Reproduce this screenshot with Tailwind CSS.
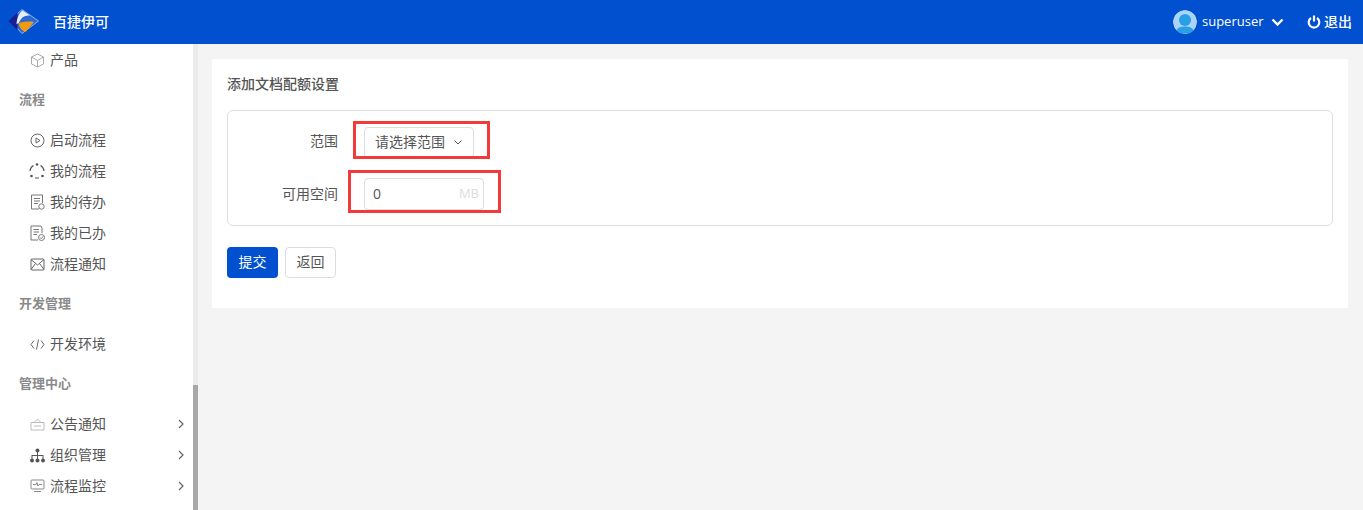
<!DOCTYPE html>
<html class="h-full w-full" lang="zh">
<head>
<meta charset="UTF-8" />
<script src="https://cdn.jsdelivr.net/npm/@tailwindcss/browser@4"></script>
</head>
<body class="h-[510px] w-[1363px] overflow-hidden flex flex-col bg-[#f4f4f4] text-[14px] text-[#555] font-['Open_Sans','Noto_Sans_CJK_SC',sans-serif]">
  <!-- header -->
  <header class="h-11 shrink-0 bg-[#0050d0] flex items-center text-white">
    <svg class="ml-2 w-[31px] h-[26px]" viewBox="0 0 31 26">
      <path d="M14 0.5 L30.5 12 L14 24.5 L8 18 V6 Z" fill="#2a6ad6" stroke="#a9c6f0" stroke-width="0.8"/>
      <path d="M0.5 12 L9.5 3.5 V21.5 Z" fill="#1a1f8f"/>
      <path d="M8.5 15 C9 9 11 4 14.5 1.5 L22 6.5 C16 6 12.5 9 11 14 Z" fill="#e8eef8"/>
      <path d="M10.5 14.5 C15 12.5 21 12 26 13 L17.5 23 C14 22 11.5 18.5 10.5 14.5 Z" fill="#f59a0c"/>
    </svg>
    <span class="ml-[14px] pb-[2px] font-medium">百捷伊可</span>
    <div class="ml-auto flex items-center">
      <svg class="w-6 h-6 rounded-full" viewBox="0 0 24 24">
        <circle cx="12" cy="12" r="12" fill="#a9d3f7"/>
        <circle cx="12" cy="10" r="6" fill="#2a9fe6"/>
        <path d="M3 21 C5 17 9 16.5 12 16.5 C15 16.5 19 17 21 21 C18 24.5 6 24.5 3 21 Z" fill="#2a9fe6"/>
      </svg>
      <span class="ml-[5px] text-[13px] w-[60px]">superuser</span>
      <svg class="ml-[9px] w-[13px] h-3" viewBox="0 0 13 12" fill="none" stroke="white" stroke-width="2.4"><path d="M1.5 3.5 L6.5 8.5 L11.5 3.5"/></svg>
      <svg class="ml-[23px] w-[14px] h-[14px]" viewBox="0 0 14 14" fill="none" stroke="white" stroke-width="2.2"><path d="M4 3 A5.3 5.3 0 1 0 10 3"/><path d="M7 0.5 V6.5"/></svg>
      <span class="ml-[3px] mr-[11px] pb-[2px] font-medium">退出</span>
    </div>
  </header>

  <div class="flex flex-1 min-h-0">
    <!-- sidebar -->
    <aside class="w-[193px] shrink-0 bg-white overflow-hidden pt-[0.5px]">
      <div class="h-[31px] flex items-center pl-[30px]">
        <svg class="w-[15px] h-[15px] text-[#aaa]" viewBox="0 0 15 15" fill="none" stroke="currentColor"><path d="M7.5 1 L13.5 4 V11 L7.5 14 L1.5 11 V4 Z M1.5 4 L7.5 7.5 L13.5 4 M7.5 7.5 V14"/></svg>
        <span class="ml-[5px] pb-[2px]">产品</span>
      </div>
      <div class="h-[49px] flex items-center pl-[19px] text-[13px] font-bold text-[#8a8a8a]">流程</div>
      <div class="h-[31px] flex items-center pl-[30px]">
        <svg class="w-[15px] h-[15px] text-[#666]" viewBox="0 0 15 15" fill="none" stroke="currentColor"><circle cx="7.5" cy="7.5" r="6.5"/><path d="M6 5 L10 7.5 L6 10 Z"/></svg>
        <span class="ml-[5px] pb-[2px]">启动流程</span>
      </div>
      <div class="h-[31px] flex items-center pl-[29px]">
        <svg class="w-[16px] h-[16px] text-[#555]" viewBox="0 0 16 16" fill="none" stroke="currentColor" stroke-width="1.2"><path d="M4.5 2.5 A7 7 0 0 0 1 8 M11.5 2.5 A7 7 0 0 1 15 8 M6 15 H10"/><circle cx="8" cy="1.5" r="1.3" fill="currentColor" stroke="none"/><circle cx="2.5" cy="13" r="1.3" fill="currentColor" stroke="none"/><circle cx="13.5" cy="13" r="1.3" fill="currentColor" stroke="none"/></svg>
        <span class="ml-[5px] pb-[2px]">我的流程</span>
      </div>
      <div class="h-[31px] flex items-center pl-[30px]">
        <svg class="w-[15px] h-[16px] text-[#777]" viewBox="0 0 15 16" fill="none" stroke="currentColor"><path d="M9 15 H1.5 V1 H12.5 V9 M4 4.5 H10 M4 7 H10 M4 9.5 H8"/><circle cx="11.5" cy="12.5" r="2.7"/></svg>
        <span class="ml-[5px] pb-[2px]">我的待办</span>
      </div>
      <div class="h-[31px] flex items-center pl-[30px]">
        <svg class="w-[15px] h-[16px] text-[#777]" viewBox="0 0 15 16" fill="none" stroke="currentColor"><path d="M8 15 H1 V1 H11 L12 3 V8 M3.5 4.5 H9 M3.5 7 H9 M3.5 9.5 H7"/><circle cx="11.5" cy="12.5" r="3"/><path d="M10 12.5 L11.2 13.7 L13 11.5"/></svg>
        <span class="ml-[5px] pb-[2px]">我的已办</span>
      </div>
      <div class="h-[31px] flex items-center pl-[30px]">
        <svg class="w-[15px] h-[13px] text-[#666]" viewBox="0 0 15 13" fill="none" stroke="currentColor"><rect x="1" y="1" width="13" height="11" rx="1"/><path d="M1 1.5 L7.5 7 L14 1.5 M1 11.5 L5.5 5.5 M14 11.5 L9.5 5.5"/></svg>
        <span class="ml-[5px] pb-[2px]">流程通知</span>
      </div>
      <div class="h-[49px] flex items-center pl-[19px] text-[13px] font-bold text-[#8a8a8a]">开发管理</div>
      <div class="h-[31px] flex items-center pl-[30px]">
        <svg class="w-[15px] h-[11px] text-[#666]" viewBox="0 0 15 11" fill="none" stroke="currentColor"><path d="M4 1.5 L1 5.5 L4 9.5 M11 1.5 L14 5.5 L11 9.5 M8.5 0.5 L6.5 10.5"/></svg>
        <span class="ml-[5px] pb-[2px]">开发环境</span>
      </div>
      <div class="h-[49px] flex items-center pl-[19px] text-[13px] font-bold text-[#8a8a8a]">管理中心</div>
      <div class="h-[31px] flex items-center pl-[30px]">
        <svg class="w-[15px] h-[13px] text-[#bbb]" viewBox="0 0 15 13" fill="none" stroke="currentColor"><path d="M1 4.5 H14 V12 H1 Z M4 4.5 L7.5 1 L11 4.5 M4 8 H11"/></svg>
        <span class="ml-[5px] pb-[2px]">公告通知</span>
        <svg class="ml-auto mr-[9px] w-[6px] h-[10px] text-[#666]" viewBox="0 0 6 10" fill="none" stroke="currentColor" stroke-width="1.2"><path d="M1 1 L5 5 L1 9"/></svg>
      </div>
      <div class="h-[31px] flex items-center pl-[30px]">
        <svg class="w-[15px] h-[15px] text-[#555]" viewBox="0 0 15 15" fill="currentColor"><circle cx="7.5" cy="2.5" r="2"/><circle cx="2" cy="12.5" r="2"/><circle cx="7.5" cy="12.5" r="2"/><circle cx="13" cy="12.5" r="2"/><path d="M7 4 H8 V7 H13.5 V11 H12.5 V8 H8 V11 H7 V8 H2.5 V11 H1.5 V7 H7 Z"/></svg>
        <span class="ml-[5px] pb-[2px]">组织管理</span>
        <svg class="ml-auto mr-[9px] w-[6px] h-[10px] text-[#666]" viewBox="0 0 6 10" fill="none" stroke="currentColor" stroke-width="1.2"><path d="M1 1 L5 5 L1 9"/></svg>
      </div>
      <div class="h-[31px] flex items-center pl-[30px]">
        <svg class="w-[15px] h-[14px] text-[#888]" viewBox="0 0 15 14" fill="none" stroke="currentColor"><rect x="1" y="1" width="13" height="9" rx="1"/><path d="M3 5.5 H6 L7 3.5 L8 7 L9 5.5 H12 M4 12.5 H11"/></svg>
        <span class="ml-[5px] pb-[2px]">流程监控</span>
        <svg class="ml-auto mr-[9px] w-[6px] h-[10px] text-[#666]" viewBox="0 0 6 10" fill="none" stroke="currentColor" stroke-width="1.2"><path d="M1 1 L5 5 L1 9"/></svg>
      </div>
      <div class="h-[31px] flex items-center pl-[30px]">
        <svg class="w-[15px] h-[15px] text-[#777]" viewBox="0 0 15 15" fill="none" stroke="currentColor"><rect x="1.5" y="1" width="12" height="13"/></svg>
      </div>
    </aside>
    <!-- sidebar scrollbar -->
    <div class="w-[5px] shrink-0 bg-[#ebebeb] flex flex-col justify-end">
      <div class="h-[125px] bg-[#a8a8a8]"></div>
    </div>

    <!-- main -->
    <main class="flex-1 min-w-0 pt-[15px] pl-[14px] pr-[15px]">
      <div class="relative h-[249px] bg-white px-[15px] pt-[16px]">
        <h1 class="h-[18px] leading-[18px] font-medium text-[#555]">添加文档配额设置</h1>
        <div class="mt-[17px] h-[116px] border border-[#ddd] rounded-md pt-[15px]">
          <div class="flex items-center h-[32px]">
            <label class="w-[110px] pb-[4px] text-right">范围</label>
            <div class="ml-[26px] w-[110px] h-[31px] border border-[#ddd] rounded flex items-center pl-[10px]">
              <span class="pb-[2px]">请选择范围</span>
              <svg class="ml-[9px] w-[8px] h-[5px] text-[#555]" viewBox="0 0 8 5" fill="none" stroke="currentColor"><path d="M0.5 0.5 L4 4 L7.5 0.5"/></svg>
            </div>
          </div>
          <div class="flex items-center h-[32px] mt-[20px]">
            <label class="w-[110px] pb-[2px] text-right">可用空间</label>
            <div class="ml-[26px] w-[120px] h-[32px] border border-[#ddd] rounded flex items-center justify-between pl-[8px] pr-[4px]">
              <span class="pb-[2px]">0</span>
              <span class="text-[13px] text-[#ddd]">MB</span>
            </div>
          </div>
        </div>
        <div class="mt-[21px] flex gap-[7px]">
          <button class="w-[51px] h-[31px] pb-[2px] bg-[#0050d0] text-white rounded">提交</button>
          <button class="w-[51px] h-[31px] pb-[2px] bg-white border border-[#ddd] rounded">返回</button>
        </div>
        <!-- red annotation boxes -->
        <div class="absolute left-[141px] top-[62px] w-[137px] h-[38px] border-[3px] border-[#f33a3a]"></div>
        <div class="absolute left-[136px] top-[111px] w-[153px] h-[43px] border-[3px] border-[#f33a3a]"></div>
      </div>
    </main>
  </div>
</body>
</html>
